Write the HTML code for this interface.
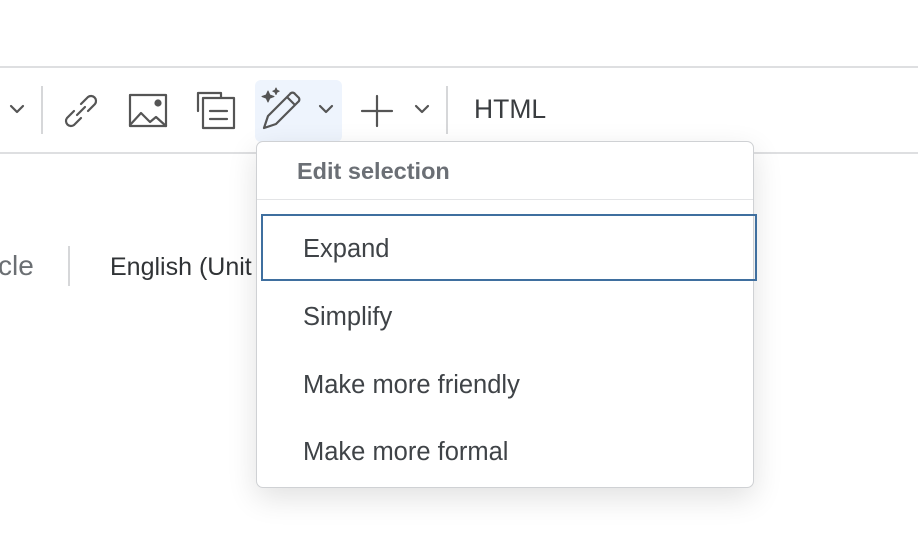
<!DOCTYPE html>
<html><head><style>
body{margin:0;width:918px;height:560px;background:#fff;position:relative;overflow:hidden;font-family:"Liberation Sans",Arial,sans-serif;color:#3c4043}
.a{position:absolute;white-space:nowrap}
.ln{position:absolute;left:0;width:918px;height:2px;background:#dedfe1}
.vs{position:absolute;width:2px;background:#d6d7d9}
svg{position:absolute;fill:none;stroke:#555;stroke-width:2.2;stroke-linecap:round;stroke-linejoin:round}
.menu{position:absolute;left:256px;top:141px;width:496px;height:345px;border:1px solid #cfd1d4;border-radius:7px;background:#fff;box-shadow:0 10px 30px rgba(0,0,0,.12)}
.it{position:absolute;left:46px;font-size:25.5px;color:#3f4347}
</style></head><body>
<div class="ln" style="top:66px"></div>
<div class="ln" style="top:152px"></div>
<svg style="left:8px;top:102px" width="18" height="14" viewBox="0 0 18 14"><path d="M3 4l6 6 6-6"/></svg>
<div class="vs" style="left:41px;top:86px;height:48px"></div>
<svg style="left:60px;top:90px" width="42" height="42" viewBox="0 0 42 42"><path d="M17 25l8-8M14 21l-7 7a5 5 0 0 0 7 7l7-7M28 21l7-7a5 5 0 0 0-7-7l-7 7"/></svg>
<svg style="left:128px;top:92px" width="42" height="38" viewBox="0 0 42 38"><rect x="2" y="3" width="36" height="31"/><path d="M2 33l11-12 9 9 6-5 10 9"/><circle cx="30" cy="11" r="2.5" fill="#555"/></svg>
<svg style="left:194px;top:90px" width="44" height="42" viewBox="0 0 44 42"><path d="M4 21V3h23v4"/><rect x="9" y="8" width="31" height="30"/><path d="M16 21h17M16 29h17"/></svg>
<div class="a" style="left:255px;top:80px;width:87px;height:62px;background:#eef4fd;border-radius:6px"></div>
<svg style="left:260px;top:86px" width="48" height="46" viewBox="0 0 48 46"><path d="M4 42l4-12 22-22a3 3 0 0 1 5 0l3 3a3 3 0 0 1 0 5L16 38z M27 11l8 8"/><path d="M8 5l1.8 4L14 10.5l-4.2 1.7L8 16l-1.8-3.8L2 10.5l4.2-1.5z M16 2l1 2.2 2.2 1-2.2 1L16 8.5l-1-2.3-2.2-1 2.2-1z" fill="#555" stroke-width="1"/></svg>
<svg style="left:317px;top:102px" width="18" height="14" viewBox="0 0 18 14"><path d="M3 4l6 6 6-6"/></svg>
<svg style="left:360px;top:94px" width="34" height="34" viewBox="0 0 34 34"><path d="M17 2v30M2 17h30"/></svg>
<svg style="left:413px;top:102px" width="18" height="14" viewBox="0 0 18 14"><path d="M3 4l6 6 6-6"/></svg>
<div class="vs" style="left:446px;top:86px;height:48px"></div>
<div class="a" style="left:474px;top:94px;font-size:26.5px;color:#3a3d40">HTML</div>
<div class="a" style="left:-2px;top:250px;font-size:28px;color:#6b6f73">cle</div>
<div class="vs" style="left:68px;top:246px;height:40px"></div>
<div class="a" style="left:110px;top:253px;font-size:25px;color:#303336">English (Unit</div>
<div class="menu">
<div class="a" style="left:40px;top:16px;font-size:23.5px;font-weight:bold;color:#6b6f75">Edit selection</div>
<div class="a" style="left:0;top:57px;width:496px;height:1px;background:#e3e4e6"></div>
<div class="a" style="left:4px;top:72px;width:496px;height:67px;border:2px solid #3f6f9f;box-sizing:border-box"></div>
<div class="it" style="top:93px">Expand</div>
<div class="it" style="top:161px">Simplify</div>
<div class="it" style="top:229px">Make more friendly</div>
<div class="it" style="top:296px">Make more formal</div>
</div>
</body></html>
